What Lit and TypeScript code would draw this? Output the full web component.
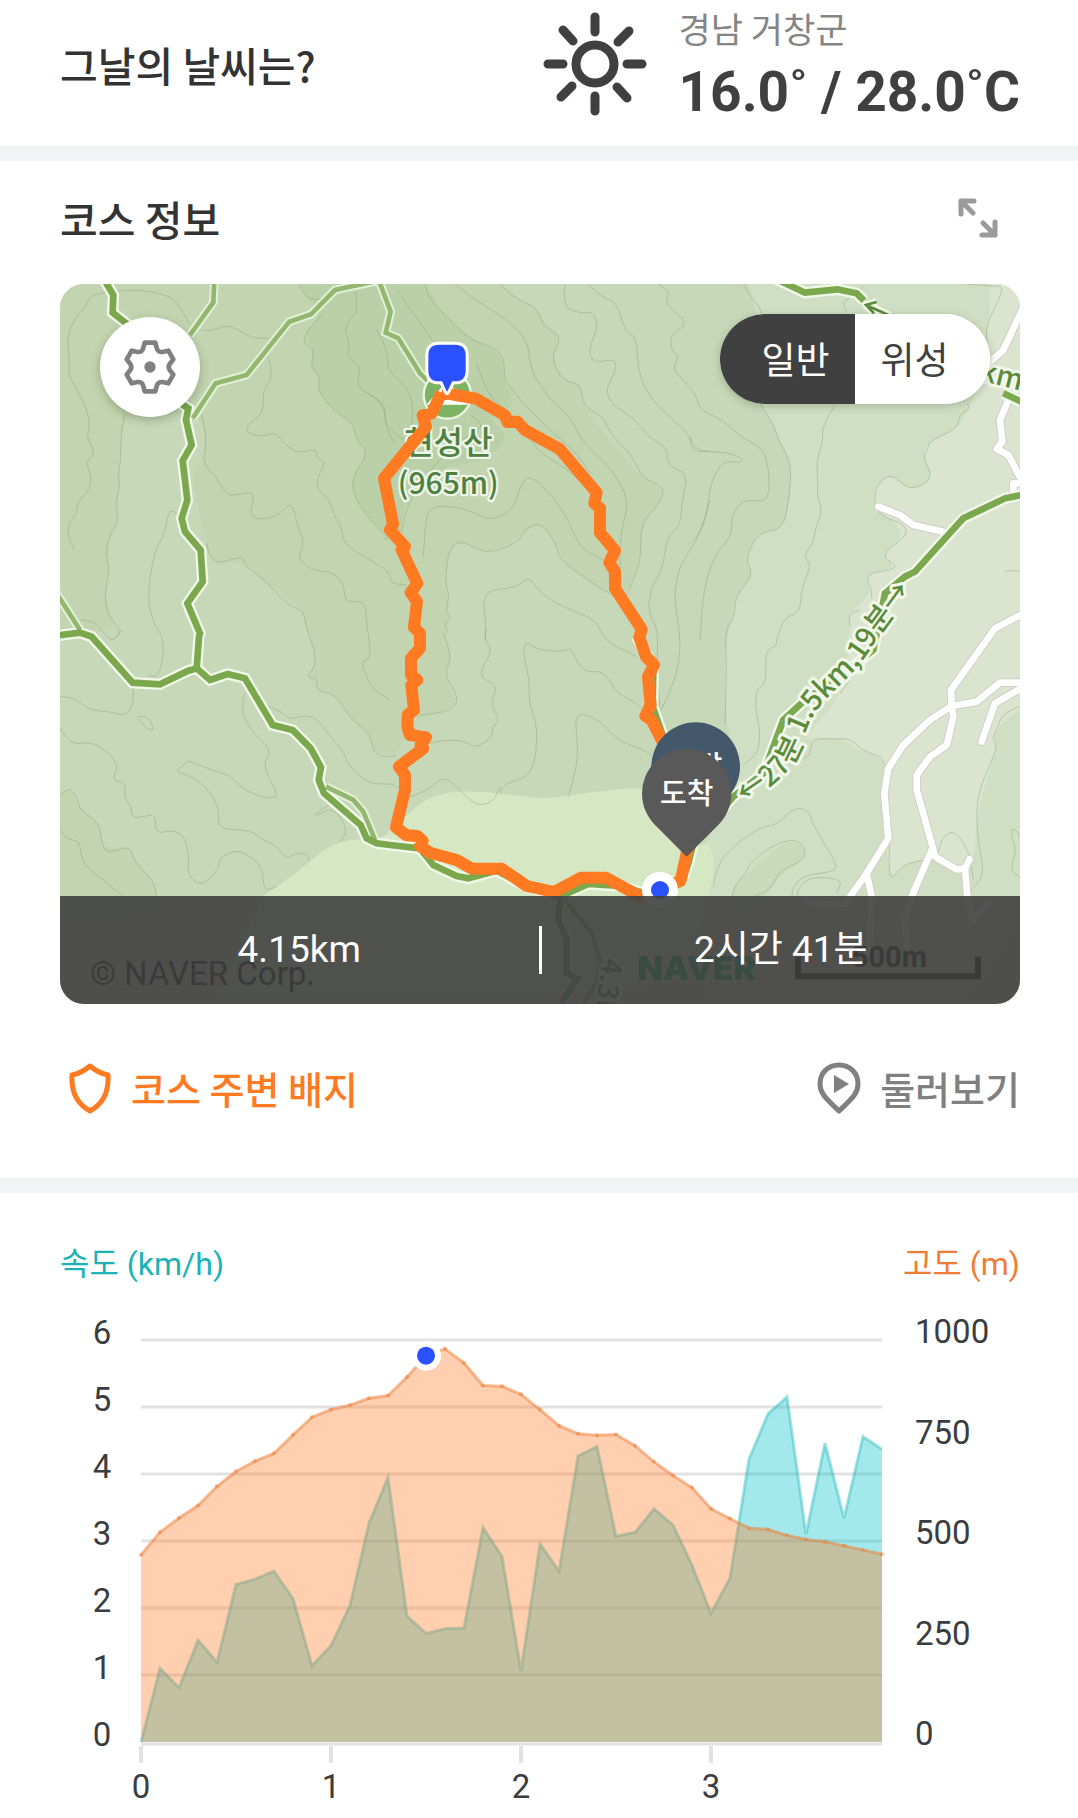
import { LitElement, html, svg, css } from "lit";
import { customElement, state } from "lit/decorators.js";

type Point = [number, number];

/* Map drawing units: three per pixel, 2880 x 2160 in total, split in six sheets. */
const SHEETS: Record<string, Point> = {
  A: [-30, -42],
  B: [930, -42],
  C: [1890, -42],
  D: [-30, 1038],
  E: [930, 1038],
  F: [1890, 1038],
};

/* "A 10,20 30,40 B 5,6" -> absolute points, each read relative to the sheet named before it. */
const points = (text: string): Point[] => {
  let origin: Point = [0, 0];
  const result: Point[] = [];
  for (const token of text.trim().split(/\s+/)) {
    if (SHEETS[token]) {
      origin = SHEETS[token];
    } else {
      const [x, y] = token.split(",").map(Number);
      result.push([x + origin[0], y + origin[1]]);
    }
  }
  return result;
};

const line = (text: string) => "M" + points(text).map((p) => p.join(" ")).join("L");

const curve = (text: string) => {
  const p = points(text);
  let d = `M${p[0].join(" ")}`;
  for (let i = 1; i < p.length - 1; i++) {
    const mx = (p[i][0] + p[i + 1][0]) / 2;
    const my = (p[i][1] + p[i + 1][1]) / 2;
    d += `Q${p[i].join(" ")} ${mx} ${my}`;
  }
  return d + `L${p[p.length - 1].join(" ")}`;
};

const AREAS: [string, string][] = [
  [
    "a-warm",
    "A 0,0 B 390,20 430,80 500,110 530,170 570,198 545,265 590,330 635,345 640,410 700,490 760,560 815,625 880,655 870,700 820,760 810,870 770,975 720,975 640,920 580,880 560,820 510,755 455,795 360,855 270,812 235,850 228,950 240,990 228,1030 240,1060 E 220,10 248,80 220,130 265,210 240,240 130,270 D 1040,380 970,370 960,320 900,270 860,195 800,185 770,135 795,110 785,20 A 765,1070 755,1010 640,940 580,870 485,890 470,830 420,600 455,580 470,480 430,430 220,430 207,560 210,640 195,720 205,760 170,840 180,920 165,960 180,1040 210,1080 0,1100",
  ],
  ["a-warm", "D 0,500 55,465 85,530 150,580 160,660 240,645 260,700 320,760 320,860 0,860"],
  [
    "a-deep",
    "A 745,30 760,80 820,130 760,190 790,235 780,290 812,320 802,365 860,430 910,460 920,515 958,548 895,635 940,730 B 60,810 95,790 100,700 180,600 B 350,570 420,500 350,440 440,410 400,330 400,260 330,220 230,150 160,30",
  ],
  [
    "a-pale",
    "C 160,20 215,115 200,400 250,455 275,530 305,580 300,690 280,778 205,785 165,870 192,912 135,985 130,1040 105,1110 F 105,285 150,420 0,720 0,1200 1100,1200 1100,-1200",
  ],
  [
    "a-grey",
    "C 900,20 905,120 885,180 890,300 840,410 805,475 715,515 700,560 732,625 660,665 600,605 550,660 550,710 655,790 570,855 622,893 525,912 545,975 475,1030 480,1080 F 460,190 340,330 360,322 460,325 500,360 588,382 575,490 585,600 600,750 640,705 690,690 745,670 850,745 860,540 925,350 905,310 990,230 1100,200 1100,-1200",
  ],
  ["a-pine", "F 120,810 130,760 210,700 290,628 345,650 345,690 270,730 240,790 150,850"],
  [
    "a-meadow",
    "D 640,798 740,730 830,650 900,628 1000,625 E 60,600 110,555 170,505 240,485 330,484 430,495 530,508 640,490 740,478 840,472 F 20,660 50,630 75,690 65,760 40,860 0,1100 D 500,1100",
  ],
];

const CONTOURS: string[] = [
  "A 72,838 50,800 60,750 82,730 80,700 132,640 105,575 138,550 108,500 122,460 100,390 55,320 60,270 50,210 70,150 108,110 120,75 180,65 270,58 350,75 385,100 420,165",
  "A 455,180 485,185 520,165 560,175 605,205 655,205",
  "A 655,260 672,320 638,360 642,430 590,465 590,490 640,500 675,485 705,525 745,550 800,535 800,568 830,575 790,645 840,690 855,745 875,770 880,820 950,865 1020,905 B 60,940 110,945",
  "A 225,430 212,480 212,580 203,620 212,645 197,690 205,760 180,790 165,850 180,900 162,970 175,1040 215,1080 190,1110",
  "A 380,730 358,710 345,790 315,840 298,930 295,1000 310,1060 D 345,30 330,140 295,138",
  "A 455,435 472,500 458,585 500,620 530,675 560,675 620,662 592,748 680,745 725,690 740,760 765,820 740,865 795,905 850,905 885,950 885,1000 945,990 950,1060 D 965,90 930,90 960,170 1020,210",
  "A 470,820 482,890 580,855 585,890 640,925 680,970 720,1010 760,1020 770,1080 D 795,60 795,115 765,140 805,145 795,180 860,195 900,265 960,310 972,375 1020,382 E 80,375",
  "A 745,42 765,80 795,90 830,85",
  "A 915,65 930,125 880,165 900,225 890,260 935,290 915,350 1000,395 1010,480 B 75,520",
  "A 820,130 760,190 765,225 795,240 780,290 812,320 802,365 860,430 910,460 920,515 958,548 895,635 940,730 1020,810 B 40,805",
  "A 90,1050 130,1050 160,1090 D 190,35 215,0",
  "B 80,60 130,130 190,215",
  "B 165,42 170,80 230,140 300,210 370,230 405,270 400,330 460,400 540,480 620,550 660,610",
  "B 255,42 300,80 400,140 475,210 480,300 540,390 600,440 640,520 720,590 780,690 750,790 750,900",
  "B 390,42 430,85 500,110 520,170 578,198 540,265 580,335 632,340 640,410 700,440 720,490 790,560 815,625 885,650 870,700 810,760 815,870 770,975",
  "B 585,42 575,110 630,130 670,125 685,170 655,240 670,280 740,265 735,310 705,360 730,410 790,440 840,505 890,530 895,590 955,610 935,700 930,770 890,800 880,890 840,960 835,1030 865,1080 E 860,100 870,230",
  "B 655,42 690,80 740,95 765,185 800,200 805,320 860,410 960,490 965,545 1020,543",
  "B 865,42 905,65 880,100 960,160 900,195 905,245 930,260 905,295 950,340 980,380 C 30,420 100,450 150,500 210,530 235,575 240,700 165,685 125,730 125,800 75,850 40,960 30,1110",
  "B 1020,690 990,800 930,880 910,980 930,1080 E 930,100 895,200 860,260",
  "B 95,790 100,700 B 250,520 350,470 300,435",
  "B 160,860 165,760 180,705 290,715 360,755 430,720 450,650 475,615 520,650 580,720 610,790 640,840 700,870",
  "B 235,1090 220,1060 245,1050 225,1020 240,980 225,940 235,840 270,808 350,855 450,815 460,780 515,755 560,825 570,870 640,920 720,975 770,980",
  "B 345,1110 350,1070 335,960 440,955 475,915 520,980 600,1020 680,1050 700,1110 E 800,80",
  "B 320,280 350,380 440,440 B 500,545 600,600 680,690",
  "B 20,180 55,240 50,300 110,350 130,400 125,470",
  "B 0,375 50,400 40,460 100,510",
  "E 220,10 250,80 220,130 270,205 240,245 150,255",
  "E 350,0 340,30 370,60 320,140 385,165 360,220 390,270 365,290 370,320 315,355 290,335 235,328 150,345",
  "E 390,490 395,460 490,440 505,290 475,220 480,150 460,80 465,30 500,60 590,65 600,50 640,130 700,120 740,190 800,220 820,240",
  "E 595,500 625,400 620,320 615,245 690,270 740,330 820,360 845,375",
  "E 120,500 170,485 220,438 260,470 320,530 370,515 390,470",
  "C 160,42 180,80 218,120 215,200",
  "C 210,400 245,450 265,510 305,580 298,680 280,780 205,785 165,870 192,912 135,980 135,1040 105,1080 F 110,100 105,285",
  "C 435,405 395,470 400,510 378,575 385,640 380,680 398,720 375,780 370,820 340,858 365,885 335,950 330,1030 285,1040 258,1110 F 260,50 225,60 230,160 195,180 200,260 210,300 205,370 160,405",
  "C 0,500 10,545 105,545 160,565 150,580 100,570 60,640 50,740 30,790 0,820",
  "C 830,42 900,48 945,50 910,120 885,180 895,240",
  "C 520,50 500,75 455,95 470,125",
  "C 830,400 845,415 805,435 805,475 715,515 715,540 697,560 732,625 660,665 600,605 550,660 560,735 640,760 655,795 570,855 622,888 600,900 525,912 545,960 545,985",
  "C 945,905 960,900 990,905",
  "C 510,1020 475,1030 480,1070",
  "F 450,190 480,150",
  "F 340,385 360,380 365,325 440,328 480,325 520,365 588,382 585,480",
  "F 70,770 80,700 140,640 215,590 260,585 315,530 360,545 365,580 440,700 435,725 340,735 310,770 305,800",
  "F 120,830 130,770 160,740 180,700 240,650 310,625 345,650 345,690 270,720 240,780 190,800",
  "F 320,800 330,740 460,745 440,790",
  "F 990,230 940,245 920,300 905,325 925,350 870,470 858,545 865,640 885,740 830,790",
  "F 600,600 595,720 605,750 635,705 700,690",
  "F 745,665 755,620 795,600 840,670 850,750",
  "F 990,620 970,585 962,620 980,660 960,720 990,742",
  "D 265,260 290,255 315,300 290,300 265,265",
  "D 30,200 70,200 115,240 180,245 230,258 250,220 250,165",
  "D 30,295 45,320 75,345 110,335 155,350 208,405 185,450 230,460 220,500 245,530 245,565 280,560 318,552 315,612 370,600 405,620 418,690 412,735 455,770 505,720 510,680 560,660 595,675 640,715 640,785 680,770",
  "D 30,500 55,465 85,510 90,540 150,580 155,650 180,670 240,645 255,700 310,750 320,800",
  "D 30,600 50,630 90,630 95,700 160,750 220,800",
  "D 585,190 570,230 600,300 668,362 635,405 690,500 650,505 580,480 540,435 480,420 412,388 400,410 372,422 450,450 510,530 500,598 600,600 640,630 685,650 710,690 740,665 778,675 775,695",
  "D 650,228 690,240 715,270 760,255 800,265 850,330 885,370 890,400 950,460 1020,463 E 60,460 100,480",
  "D 845,520 795,550 800,558 850,530 895,600 870,635",
];

const TRAILS: string[] = [
  "A 160,25 190,75 188,128 235,165 400,405 415,415 408,450 425,525 398,572 412,690 395,745 405,785 452,840 458,935 412,1000 450,1090 D 447,20 440,115",
  "D 10,18 90,8 125,20 248,158 330,163 415,122 440,115 480,150 533,132 585,145 668,285 728,300 782,355 813,412 806,450 822,490 932,585 950,625 980,640 1020,645 E 150,655 190,705 260,738 295,745 380,722 470,770 570,800 655,762 750,768 860,800",
  "C 260,28 345,68 442,58 500,70 522,92",
  "C 1010,672 945,685 820,745 675,905 645,920 585,970 F 550,60 500,100 340,215 280,270 250,350 220,430 130,500 10,640 E 955,700 935,755",
  "C 940,370 1000,398",
  "E 800,20 850,110 848,230 890,350",
  "E 570,800 565,870 590,930 590,1030 622,1045 575,1120",
];

const PATHS: string[] = [
  "A 493,30 490,97 420,195",
  "A 428,445 497,340 590,315 718,155 783,133 855,60 985,32",
  "B 26,30 62,125 47,188 85,205 150,310 175,335",
  "A 20,970 90,1080",
  "D 828,470 910,510 940,545 975,630",
  "E 585,810 665,910 690,990 680,1060 640,1120",
];

const ROADS: string[] = [
  "C 1010,90 940,240 890,285",
  "C 955,390 930,450 937,515 920,537 955,555 1000,640",
  "C 1000,640 970,640 970,665",
  "C 565,710 630,735 670,765 760,785",
  "C 1010,1025 915,1075 F 783,180 785,228 790,260 770,345 720,380 680,435 680,480 725,640 735,680 800,718 825,715 838,688",
  "F 1010,158 930,158 860,215 785,228 720,270 640,345 595,415 583,490 595,625 530,730 480,800 470,820 380,825 345,810",
  "F 530,730 545,800 540,930 520,990",
  "F 725,660 665,800 645,870 650,950",
  "F 825,715 832,800 850,870 900,820",
  "F 1010,165 915,220 875,335",
];

const ROUTE =
  "B 215,368 318,386 405,436 412,456 442,455 465,480 570,538 680,668 673,700 690,715 690,788 735,842 718,878 735,905 735,955 815,1078 E 808,22 828,80 852,105 834,140 842,225 826,258 845,270 885,350 975,560 950,670 932,752 870,780 808,798 708,743 632,743 553,786 470,768 395,716 305,716 260,690 180,668 150,648 158,632 142,618 110,616 78,592 105,480 105,435 87,410 160,355 152,345 168,322 120,315 112,290 113,255 132,240 124,165 142,150 123,135 123,85 150,55 150,10 B 132,1072 141,995 122,968 142,940 95,840 105,830 60,780 69,762 42,625 168,470 158,436 185,430 215,368";

@customElement("course-map")
class CourseMap extends LitElement {
  @state() private view = "normal";

  static styles = css`
    :host {
      display: block;
    }
    .map {
      position: relative;
      overflow: hidden;
      border-radius: 24px;
      background: #c6d8b8;
    }
    .canvas {
      display: block;
      width: 100%;
      height: auto;
      font-family: "Noto Sans CJK KR", sans-serif;
    }
    .a-warm { fill: #c3d4b0; }
    .a-deep { fill: #bad0a8; }
    .a-pale { fill: #d0dfc3; }
    .a-grey { fill: #dae4cf; }
    .a-pine { fill: #c8dab8; }
    .a-meadow { fill: #d6e8c3; }
    .contour {
      fill: none;
      stroke: #8ba27c;
      stroke-opacity: 0.45;
      stroke-width: 3;
    }
    .road,
    .road-edge,
    .trail,
    .trail-edge,
    .path,
    .path-edge,
    .route {
      fill: none;
      stroke-linejoin: miter;
    }
    .road { stroke: #fff; stroke-width: 20; stroke-linecap: round; stroke-linejoin: round; }
    .road-edge { stroke: #d0cfc8; stroke-width: 26; stroke-linecap: round; stroke-linejoin: round; }
    .trail { stroke: #7ba84d; stroke-width: 20; }
    .trail-edge { stroke: #f1f8ea; stroke-width: 34; }
    .path { stroke: #92b870; stroke-width: 14; }
    .path-edge { stroke: #e3efd8; stroke-width: 26; }
    .route { stroke: #ff7a20; stroke-width: 36; stroke-linejoin: round; }
    .peak { fill: #7db464; stroke: #eaf5e2; stroke-width: 7; }
    .snow { fill: #fff; }
    .label {
      fill: #4f8043;
      stroke: #eef6e8;
      stroke-width: 14;
      stroke-linejoin: round;
      paint-order: stroke;
      font-size: 96px;
      font-weight: 500;
      text-anchor: middle;
    }
    .height { font-size: 90px; }
    .way {
      fill: #5a8a3a;
      stroke: #f1f8ea;
      stroke-width: 18;
      stroke-linejoin: round;
      paint-order: stroke;
      font-size: 86px;
      font-weight: 500;
    }
    .arrow { fill: none; stroke: #5a8a3a; stroke-width: 8; }
    .arrow-edge { fill: none; stroke: #f1f8ea; stroke-width: 24; stroke-linejoin: round; }
    .pin-name { fill: #fff; font-size: 87px; font-weight: 500; text-anchor: middle; }
    .start { fill: #44586b; }
    .end { fill: #595959; }
    .white { fill: #fff; }
    .blue { fill: #2b50ff; }
    .marker { fill: #2b50ff; stroke: #fff; stroke-width: 18; stroke-linejoin: round; paint-order: stroke; }
    .copyright { font-family: Roboto, sans-serif; font-size: 99px; fill: #000; }
    .brand {
      font-family: Inter, sans-serif;
      font-weight: 900;
      font-size: 100px;
      fill: #00a85a;
      stroke: #fff;
      stroke-opacity: 0.5;
      stroke-width: 10;
      paint-order: stroke;
    }
    .scale { font-family: Roboto, sans-serif; font-weight: 700; font-size: 87px; text-anchor: middle; }
    .ruler { fill: none; stroke: #000; stroke-width: 18; }
    .settings {
      position: absolute;
      left: 40px;
      top: 33px;
      width: 100px;
      height: 100px;
      padding: 0;
      border: 0;
      border-radius: 50%;
      background: #fff;
      box-shadow: 0 3px 10px rgba(40, 60, 30, 0.3);
      display: grid;
      place-items: center;
    }
    .gear { width: 56px; height: 56px; display: block; }
    .gear-line { fill: none; stroke: #808080; stroke-width: 14; stroke-linejoin: round; }
    .gear-dot { fill: #808080; }
    .views {
      position: absolute;
      right: 30px;
      top: 30px;
      display: flex;
      width: 270px;
      height: 90px;
      border-radius: 45px;
      overflow: hidden;
      background: #fff;
      box-shadow: 0 2px 8px rgba(40, 60, 30, 0.25);
    }
    .view {
      flex: 1;
      border: 0;
      background: #fff;
      color: #404040;
      font-family: "Noto Sans CJK KR", sans-serif;
      font-size: 37px;
      line-height: 48px;
    }
    .view:first-child { padding: 0 0 2px 16px; }
    .view:last-child { padding: 0 16px 2px 0; }
    .view[aria-pressed="true"] { background: #404040; color: #fff; }
    .summary {
      position: absolute;
      left: 0;
      right: 0;
      bottom: 0;
      height: 108px;
      display: flex;
      align-items: center;
      background: rgba(64, 64, 64, 0.9);
      color: #fff;
      font-family: Roboto, "Noto Sans CJK KR", sans-serif;
      font-size: 37px;
      line-height: 48px;
      text-align: center;
    }
    .figure { flex: 1; }
    .rule { width: 3px; height: 48px; background: #fff; }
  `;

  render() {
    const strokes = (list: string[], name: string) =>
      list.map((d) => svg`<path class=${name} d=${line(d)} />`);
    return html`
      <div class="map">
        <svg class="canvas" viewBox="0 0 2880 2160" role="img" aria-label="현성산 코스 지도">
          ${AREAS.map(([name, d]) => svg`<path class=${name} d=${curve(d) + "Z"} />`)}
          ${CONTOURS.map((d) => svg`<path class="contour" d=${curve(d)} />`)}
          ${strokes(ROADS, "road-edge")} ${strokes(ROADS, "road")}
          ${strokes(PATHS, "path-edge")} ${strokes(TRAILS, "trail-edge")}
          ${strokes(PATHS, "path")} ${strokes(TRAILS, "trail")}
          <circle class="peak" cx="1162" cy="333" r="71" />
          <path class="snow" d="M1162 290L1225 362H1099Z" />
          <text class="label" x="1165" y="510">현성산</text>
          <text class="label height" x="1165" y="630">(965m)</text>

          <path id="way-line" fill="none" d="M2055 1560L2140 1502Q2204 1450 2226 1385Q2240 1312 2290 1254L2372 1172Q2420 1120 2450 1064L2500 996L2620 832" />
          <text class="way"><textPath href="#way-line">←27분 1.5km,19분→</textPath></text>
          <path class="arrow-edge" d="M2450 54L2418 63L2442 88M2418 63L2490 95" />
          <path class="arrow" d="M2450 54L2418 63L2442 88M2418 63L2490 95" />
          <text class="way" transform="translate(2755 288) rotate(14)">km</text>

          <path class="route" d=${line(ROUTE)} />
          <path class="marker" d="M1137 182h48q32 0 32 32v46q0 32-32 32h-8L1161 324L1146 292h-9q-32 0-32-32v-46q0-32 32-32z" />

          <path class="start" d="M1907 1638L1815 1544A133 133 0 1 1 1999 1544Z" />
          <text class="pin-name" x="1907" y="1480">출발</text>
          <path class="end" d="M1880 1718L1786 1624A134 134 0 1 1 1974 1624Z" />
          <text class="pin-name" x="1880" y="1560">도착</text>
          <circle class="white" cx="1800" cy="1818" r="54" />
          <circle class="blue" cx="1800" cy="1818" r="27" />

          <text class="copyright" x="90" y="2104">© NAVER Corp.</text>
          <text class="way" transform="translate(1628 2020) rotate(98)">4.3km</text>
          <text class="brand" x="1732" y="2088">NAVER</text>
          <text class="scale" x="2488" y="2048">500m</text>
          <path class="ruler" d="M2214 2018V2077H2754V2018" />
        </svg>
        <button class="settings" type="button" aria-label="지도 설정">
          <svg class="gear" viewBox="216 208 168 168" aria-hidden="true">
            <path class="gear-line" d="M284 219H316L321 238Q325 248 337 247L355 243L370 269L359 283Q353 292 359 301L370 315L355 341L337 337Q325 336 321 346L316 365H284L279 346Q275 336 263 337L245 341L230 315L241 301Q247 292 241 283L230 269L245 243L263 247Q275 248 279 238Z" />
            <circle class="gear-dot" cx="300" cy="292" r="17" />
          </svg>
        </button>
        <div class="views">
          <button class="view" type="button" aria-pressed=${this.view === "normal"} @click=${() => (this.view = "normal")}>일반</button>
          <button class="view" type="button" aria-pressed=${this.view === "satellite"} @click=${() => (this.view = "satellite")}>위성</button>
        </div>
        <div class="summary">
          <span class="figure">4.15km</span>
          <span class="rule"></span>
          <span class="figure">2시간 41분</span>
        </div>
      </div>
    `;
  }
}

/* One sample for every 0.1 km. */
const ELEVATION = [
  465, 522, 557, 588, 636, 673, 699, 718, 764, 808, 827, 838, 855, 862, 908, 961, 978, 943, 887, 885,
  865, 827, 787, 767, 763, 765, 737, 697, 663, 633, 580, 556, 532, 529, 514, 504, 498, 488, 478, 467,
];
const SPEED = [
  0, 1.1, 0.81, 1.52, 1.19, 2.35, 2.43, 2.55, 2.14, 1.14, 1.44, 2.04, 3.27, 3.95, 1.88, 1.62, 1.69, 1.7, 3.2, 2.77,
  1.06, 2.96, 2.55, 4.27, 4.41, 3.07, 3.13, 3.48, 3.24, 2.64, 1.92, 2.45, 4.22, 4.9, 5.15, 3.1, 4.46, 3.34, 4.56, 4.37,
];
const SUMMIT = 15;

@customElement("track-chart")
class TrackChart extends LitElement {
  static styles = css`
    :host {
      display: block;
    }
    .chart {
      display: block;
      width: 100%;
      height: auto;
      font-family: Roboto, sans-serif;
      font-size: 33px;
    }
    .grid,
    .tick {
      stroke: #e2e2e2;
      stroke-width: 3;
    }
    .tick { stroke-width: 4; }
    .speed { fill: #00c2c8; fill-opacity: 0.36; }
    .speed-line { fill: none; stroke: #1fb5bb; stroke-opacity: 0.4; stroke-width: 3; }
    .elevation { fill: #ff7a20; fill-opacity: 0.36; }
    .elevation-line { fill: none; stroke: #ee7d35; stroke-opacity: 0.5; stroke-width: 3; }
    .sample { fill: #ee7d35; fill-opacity: 0.5; }
    .axis { fill: #3a3d40; }
    .middle { text-anchor: middle; }
    .white { fill: #fff; }
    .blue { fill: #2b50ff; }
  `;

  render() {
    const x = (i: number) => 81 + i * 19;
    const ySpeed = (v: number) => 442 - v * 67;
    const yElevation = (v: number) => 442 - v * 0.402;
    const speed = SPEED.map((v, i) => `${x(i)} ${ySpeed(v)}`).join("L");
    const elevation = ELEVATION.map((v, i) => `${x(i)} ${yElevation(v)}`).join("L");
    const end = x(SPEED.length - 1);
    return html`
      <svg class="chart" viewBox="0 0 960 518" role="img" aria-label="거리별 속도와 고도">
        ${[1, 2, 3, 4, 5, 6].map((v) => svg`<line class="grid" x1="81" x2=${end} y1=${ySpeed(v)} y2=${ySpeed(v)} />`)}
        <path class="speed" d="M${speed}V442H81Z" />
        <path class="speed-line" d="M${speed}" />
        <path class="elevation" d="M${elevation}V442H81Z" />
        <path class="elevation-line" d="M${elevation}" />
        ${ELEVATION.map((v, i) => svg`<circle class="sample" cx=${x(i)} cy=${yElevation(v)} r="2" />`)}
        <line class="grid" x1="81" x2=${end} y1="444" y2="444" />
        ${[0, 1, 2, 3].map(
          (v) => svg`
            <line class="tick" x1=${x(v * 10)} x2=${x(v * 10)} y1="446" y2="463" />
            <text class="axis middle" x=${x(v * 10)} y="498">${v}</text>`
        )}
        ${[0, 1, 2, 3, 4, 5, 6].map((v) => svg`<text class="axis middle" x="42" y=${ySpeed(v) + 4}>${v}</text>`)}
        ${[0, 250, 500, 750, 1000].map((v) => svg`<text class="axis" x="855" y=${yElevation(v) + 3}>${v}</text>`)}
        <circle class="white" cx=${x(SUMMIT)} cy=${yElevation(ELEVATION[SUMMIT])} r="15" />
        <circle class="blue" cx=${x(SUMMIT)} cy=${yElevation(ELEVATION[SUMMIT])} r="9" />
      </svg>
    `;
  }
}

@customElement("app-root")
class AppRoot extends LitElement {
  static styles = css`
    :host {
      display: block;
      background: #fff;
      color: #333;
      font-family: "Noto Sans CJK KR", sans-serif;
    }
    .section {
      padding: 0 58px 0 60px;
    }
    .section + .section {
      border-top: 15px solid #f1f3f5;
    }
    .title {
      margin: 0;
      font-size: 41px;
      line-height: 48px;
      font-weight: 500;
    }
    .weather {
      display: flex;
      align-items: center;
      gap: 32px;
      padding-top: 4px;
      padding-bottom: 22px;
    }
    .weather .title { flex: 1; }
    .sun { width: 104px; height: 104px; fill: none; stroke: #404040; stroke-width: 9; stroke-linecap: round; }
    .reading {
      flex: 0 0 340px;
      display: flex;
      flex-direction: column;
      gap: 8px;
      white-space: nowrap;
    }
    .place { color: #858585; font-size: 35px; line-height: 48px; }
    .degrees {
      color: #404040;
      font-family: Roboto, sans-serif;
      font-size: 55px;
      line-height: 64px;
      font-weight: 700;
    }
    .head {
      display: flex;
      align-items: center;
      justify-content: space-between;
      padding: 33px 22px 42px 0;
    }
    .expand {
      width: 40px;
      height: 40px;
      padding: 0;
      border: 0;
      background: none;
    }
    .expand-icon {
      display: block;
      width: 40px;
      height: 40px;
      fill: none;
      stroke: #9a9a9a;
      stroke-width: 5;
      stroke-linecap: round;
      stroke-linejoin: round;
    }
    .links {
      display: flex;
      justify-content: space-between;
      padding: 58px 0 64px;
    }
    .link {
      display: flex;
      align-items: center;
      gap: 19px;
      font-size: 38px;
      line-height: 52px;
      font-weight: 500;
      text-decoration: none;
    }
    .badges { color: #ff7a20; padding-left: 8px; }
    .tour { color: #808080; }
    .link-icon { width: 44px; height: 52px; fill: none; stroke: currentColor; stroke-width: 5; stroke-linejoin: round; }
    .play { fill: currentColor; stroke: none; }
    .legend {
      display: flex;
      justify-content: space-between;
      padding: 51px 0 16px;
      font-family: Roboto, "Noto Sans CJK KR", sans-serif;
      font-size: 32px;
      line-height: 40px;
    }
    .speed { color: #1bb3b5; }
    .elevation { color: #ee7d35; }
  `;

  render() {
    return html`
      <section class="section weather">
        <h2 class="title">그날의 날씨는?</h2>
        <svg class="sun" viewBox="-52 -52 104 104" role="img" aria-label="맑음">
          <circle r="19" />
          <path d="M0 -47V-32M0 47V32M-47 0H-32M47 0H32M-32 -34L-22 -23M34 -33L23 -22M-34 33L-23 22M32 34L22 23" />
        </svg>
        <div class="reading">
          <span class="place">경남 거창군</span>
          <span class="degrees">16.0˚ / 28.0˚C</span>
        </div>
      </section>
      <section class="section">
        <div class="head">
          <h2 class="title">코스 정보</h2>
          <button class="expand" type="button" aria-label="지도 크게 보기">
            <svg class="expand-icon" viewBox="0 0 40 40" aria-hidden="true">
              <path d="M16 3H3V16M3 3L15 15M24 37H37V24M37 37L25 25" />
            </svg>
          </button>
        </div>
        <course-map></course-map>
        <nav class="links">
          <a class="link badges" href="#badges">
            <svg class="link-icon" viewBox="0 0 44 52" aria-hidden="true">
              <path d="M22 4Q30 11 40 13C41 30 35 42 22 49C9 42 3 30 4 13Q14 11 22 4Z" />
            </svg>
            코스 주변 배지
          </a>
          <a class="link tour" href="#tour">
            <svg class="link-icon" viewBox="0 0 44 52" aria-hidden="true">
              <path d="M22 3C11 3 3 11 3 22C3 33 12 39 22 49C32 39 41 33 41 22C41 11 33 3 22 3Z" />
              <path class="play" d="M17 13L32 22L17 31Z" />
            </svg>
            둘러보기
          </a>
        </nav>
      </section>
      <section class="section">
        <div class="legend">
          <span class="speed">속도 (km/h)</span>
          <span class="elevation">고도 (m)</span>
        </div>
        <track-chart></track-chart>
      </section>
    `;
  }
}
